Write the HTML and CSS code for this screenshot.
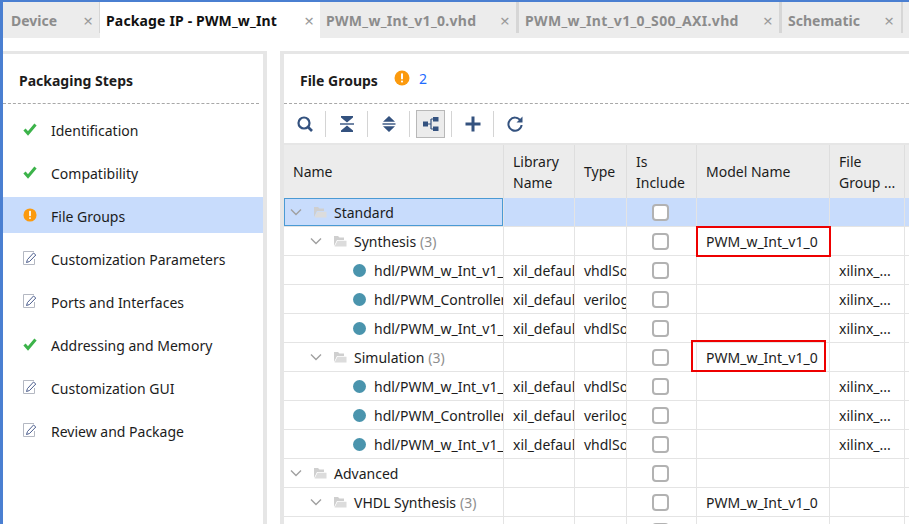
FILE: index.html
```html
<!DOCTYPE html>
<html lang="en">
<head>
  <meta charset="UTF-8">
  <title>Package IP - PWM_w_Int</title>
  <link rel="stylesheet" href="styles.css">
</head>
<body>
  <svg class="defs" width="0" height="0">
    <symbol id="check" viewBox="0 0 14 14"><path d="M1.5 7.5 L5 11.5 L12.5 2.5" fill="none" stroke="#3cb34a" stroke-width="3"/></symbol>
    <symbol id="warn" viewBox="0 0 16 16"><circle cx="8" cy="8" r="7.5" fill="#fb9a0e"/><rect x="7" y="3.2" width="2" height="6.2" rx="0.8" fill="#fff"/><rect x="7" y="10.6" width="2" height="2" rx="0.8" fill="#fff"/></symbol>
    <symbol id="edit" viewBox="0 0 14 14"><path d="M11 .5 H.5 V13.5 H11.5 V8" fill="none" stroke="#b4b8c2"/><path d="M3.5 11.5 L4.5 8.5 L10.5 2 L12.8 4 L6.5 10.5 Z" fill="#fff" stroke="#4c5e8e"/></symbol>
    <symbol id="chev" viewBox="0 0 12 8"><path d="M1 1.5 L6 6.5 L11 1.5" fill="none" stroke="#a0a0a0" stroke-width="1.4"/></symbol>
    <symbol id="folder" viewBox="0 0 14 12"><path d="M1 11 V1 H5 L6.5 2.5 H11 V5 H4 L1 11 Z" fill="#cfcfcf"/><path d="M1.5 11.5 L4.5 5.8 H13.5 V11.5 Z" fill="#dcdcdc"/></symbol>
  </svg>

  <div class="tabs">
    <div class="tab tab-device"><span>Device</span><i>&times;</i></div>
    <div class="tab tab-active tab-package"><span>Package IP - PWM_w_Int</span><i>&times;</i></div>
    <div class="tab tab-vhd"><span>PWM_w_Int_v1_0.vhd</span><i>&times;</i></div>
    <div class="tab tab-axi"><span>PWM_w_Int_v1_0_S00_AXI.vhd</span><i>&times;</i></div>
    <div class="tab tab-sch"><span>Schematic</span><i>&times;</i></div>
  </div>

  <div class="content">
    <aside class="steps">
      <div class="panel-title steps-title"><b>Packaging Steps</b></div>
      <ul class="step-list">
        <li><svg class="ico"><use href="#check"/></svg>Identification</li>
        <li><svg class="ico"><use href="#check"/></svg>Compatibility</li>
        <li class="current"><svg class="ico"><use href="#warn"/></svg>File Groups</li>
        <li><svg class="ico"><use href="#edit"/></svg>Customization Parameters</li>
        <li><svg class="ico"><use href="#edit"/></svg>Ports and Interfaces</li>
        <li><svg class="ico"><use href="#check"/></svg>Addressing and Memory</li>
        <li><svg class="ico"><use href="#edit"/></svg>Customization GUI</li>
        <li><svg class="ico"><use href="#edit"/></svg>Review and Package</li>
      </ul>
    </aside>

    <section class="groups">
      <div class="panel-title"><b>File Groups</b><svg class="title-warn"><use href="#warn"/></svg><span class="count">2</span></div>

      <div class="toolbar">
        <button class="tool"><svg viewBox="0 0 18 18"><circle cx="8" cy="8" r="5.5" fill="none" stroke="#34527f" stroke-width="2.2"/><path d="M12 12 L16 16" stroke="#34527f" stroke-width="2.6"/></svg></button>
        <span class="sep"></span>
        <button class="tool"><svg viewBox="0 0 18 18"><path d="M3 1 H15 V2.5 L9 7.5 L3 2.5 Z M3 17 H15 V15.5 L9 10.5 L3 15.5 Z" fill="#34527f"/><rect x="2" y="8.3" width="14" height="1.4" fill="#34527f"/></svg></button>
        <span class="sep"></span>
        <button class="tool"><svg viewBox="0 0 18 18"><path d="M9 1 L15 6.8 H3 Z M9 17 L15 11.2 H3 Z" fill="#34527f"/><rect x="2.5" y="8.3" width="13" height="1.4" fill="#34527f"/></svg></button>
        <span class="sep"></span>
        <button class="tool tool-on"><svg viewBox="0 0 18 18"><rect x="1" y="6.5" width="5" height="5" fill="#34527f"/><rect x="11" y="2" width="5.5" height="4.5" fill="#34527f"/><rect x="11" y="11.5" width="5.5" height="4.5" fill="#34527f"/><path d="M6 9 H9 M9 4 H11 M9 14 H11 M9 4 V14" fill="none" stroke="#34527f" stroke-width="1.2"/></svg></button>
        <span class="sep"></span>
        <button class="tool"><svg viewBox="0 0 18 18"><path d="M1.5 9 H16.5 M9 1.5 V16.5" stroke="#34527f" stroke-width="3"/></svg></button>
        <span class="sep"></span>
        <button class="tool"><svg viewBox="0 0 18 18"><path d="M14.5 5.5 A6.6 6.6 0 1 0 15.6 10" fill="none" stroke="#34527f" stroke-width="2"/><path d="M16.5 1.5 V7.5 H10.5 Z" fill="#34527f"/></svg></button>
      </div>

      <div class="table-wrap">
        <table class="grid">
          <colgroup>
            <col class="c-name"><col class="c-lib"><col class="c-type"><col class="c-inc"><col class="c-model"><col class="c-group"><col>
          </colgroup>
          <thead>
            <tr>
              <th>Name</th><th>Library<br>Name</th><th>Type</th><th>Is<br>Include</th><th>Model Name</th><th>File<br>Group ...</th><th></th>
            </tr>
          </thead>
          <tbody>
            <tr class="selected">
              <td class="name"><div class="node focus"><svg class="chev"><use href="#chev"/></svg><svg class="folder"><use href="#folder"/></svg>Standard</div></td>
              <td></td><td></td><td class="box"><span></span></td><td></td><td></td><td></td>
            </tr>
            <tr>
              <td class="name"><div class="node lv1"><svg class="chev"><use href="#chev"/></svg><svg class="folder"><use href="#folder"/></svg>Synthesis <em>(3)</em></div></td>
              <td></td><td></td><td class="box"><span></span></td><td>PWM_w_Int_v1_0</td><td></td><td></td>
            </tr>
            <tr>
              <td class="name"><div class="node leaf"><span class="dot"></span>hdl/PWM_w_Int_v1_0.vhd</div></td>
              <td>xil_defaultlib</td><td>vhdlSource</td><td class="box"><span></span></td><td></td><td>xilinx_...</td><td></td>
            </tr>
            <tr>
              <td class="name"><div class="node leaf"><span class="dot"></span>hdl/PWM_Controller.v</div></td>
              <td>xil_defaultlib</td><td>verilogSource</td><td class="box"><span></span></td><td></td><td>xilinx_...</td><td></td>
            </tr>
            <tr>
              <td class="name"><div class="node leaf"><span class="dot"></span>hdl/PWM_w_Int_v1_0_S00_AXI.vhd</div></td>
              <td>xil_defaultlib</td><td>vhdlSource</td><td class="box"><span></span></td><td></td><td>xilinx_...</td><td></td>
            </tr>
            <tr>
              <td class="name"><div class="node lv1"><svg class="chev"><use href="#chev"/></svg><svg class="folder"><use href="#folder"/></svg>Simulation <em>(3)</em></div></td>
              <td></td><td></td><td class="box"><span></span></td><td>PWM_w_Int_v1_0</td><td></td><td></td>
            </tr>
            <tr>
              <td class="name"><div class="node leaf"><span class="dot"></span>hdl/PWM_w_Int_v1_0.vhd</div></td>
              <td>xil_defaultlib</td><td>vhdlSource</td><td class="box"><span></span></td><td></td><td>xilinx_...</td><td></td>
            </tr>
            <tr>
              <td class="name"><div class="node leaf"><span class="dot"></span>hdl/PWM_Controller.v</div></td>
              <td>xil_defaultlib</td><td>verilogSource</td><td class="box"><span></span></td><td></td><td>xilinx_...</td><td></td>
            </tr>
            <tr>
              <td class="name"><div class="node leaf"><span class="dot"></span>hdl/PWM_w_Int_v1_0_S00_AXI.vhd</div></td>
              <td>xil_defaultlib</td><td>vhdlSource</td><td class="box"><span></span></td><td></td><td>xilinx_...</td><td></td>
            </tr>
            <tr>
              <td class="name"><div class="node"><svg class="chev"><use href="#chev"/></svg><svg class="folder"><use href="#folder"/></svg>Advanced</div></td>
              <td></td><td></td><td class="box"><span></span></td><td></td><td></td><td></td>
            </tr>
            <tr>
              <td class="name"><div class="node lv1"><svg class="chev"><use href="#chev"/></svg><svg class="folder"><use href="#folder"/></svg>VHDL Synthesis <em>(3)</em></div></td>
              <td></td><td></td><td class="box"><span></span></td><td>PWM_w_Int_v1_0</td><td></td><td></td>
            </tr>
            <tr>
              <td class="name"></td>
              <td></td><td></td><td class="box"><span></span></td><td></td><td></td><td></td>
            </tr>
          </tbody>
        </table>
        <div class="mark mark-a"></div>
        <div class="mark mark-b"></div>
      </div>
    </section>
  </div>
</body>
</html>
```

FILE: styles.css
```css
html, body { margin: 0; height: 100%; overflow: hidden; }
body { font-family: "Noto Sans", "Open Sans", sans-serif; font-size: 14px; color: #1c1c1c; background: #fff; border-top: 2px solid #4a7fd1; border-left: 3px solid #4a7fd1; box-sizing: border-box; }
.defs { position: absolute; }

/* tabs */
.tabs { display: flex; height: 36px; background: #ececec; }
.tab { display: flex; align-items: center; justify-content: space-between; box-sizing: border-box; height: 36px; padding: 0 9px 0 6px; font-weight: bold; color: #8c8c8c; background: linear-gradient(#d6d6d6, #d6d6d6) right top / 3px 31px no-repeat; }
.tab span { white-space: nowrap; }
.tab i { font-style: normal; font-weight: normal; font-size: 17px; color: #9a9a9a; }
.tab-device { width: 97px; padding-left: 8px; padding-right: 7px; background-size: 1px 31px; }
.tab-active { background: #fff; color: #111; padding-right: 6px; }
.tab-package { width: 220px; letter-spacing: .15px; }
.tab-vhd { width: 199px; letter-spacing: .3px; }
.tab-axi { width: 263px; letter-spacing: .35px; }
.tab-sch { width: 121px; background-size: 2px 31px; }

/* panels */
.content { display: flex; padding-top: 13px; gap: 13px; height: 500px; }
.steps { width: 260px; flex: none; border-top: 3px solid #e6e6e6; border-right: 4px solid #e6e6e6; }
.groups { flex: 1; min-width: 0; border-top: 3px solid #e6e6e6; border-left: 4px solid #e6e6e6; }
.panel-title { display: flex; align-items: center; height: 50px; padding: 3px 0 0 16px; border-bottom: 1px dashed #a8a8a8; box-sizing: border-box; }
.steps-title { margin-right: 4px; }
.title-warn { width: 16px; height: 16px; margin: -4px 0 0 16px; }
.count { margin: -3px 0 0 9px; color: #1f6bff; }

/* steps */
.step-list { list-style: none; margin: 7px 0 0; padding: 0; display: flex; flex-direction: column; gap: 7px; }
.step-list li { display: flex; align-items: center; box-sizing: border-box; height: 36px; padding: 2px 0 0 20px; }
.step-list .current { background: #c8dcfc; }
.ico { width: 14px; height: 14px; margin: -3px 14px 0 0; flex: none; }

/* toolbar */
.toolbar { display: flex; align-items: center; gap: 6px; height: 39px; padding-left: 6px; border-bottom: 2px solid #e6e6e6; }
.tool { display: flex; align-items: center; justify-content: center; width: 29px; height: 28px; padding: 0; background: none; border: 1px solid transparent; box-sizing: border-box; }
.tool svg { width: 18px; height: 18px; }
.tool-on { background: #ececec; border-color: #b8b8b8; }
.sep { width: 1px; height: 26px; background: #d4d4d4; }

/* table */
.table-wrap { position: relative; }
.grid { width: 100%; table-layout: fixed; border-collapse: separate; border-spacing: 0; }
.c-name { width: 220px; }
.c-lib { width: 71px; }
.c-type { width: 52px; }
.c-inc { width: 70px; }
.c-model { width: 133px; }
.c-group { width: 75px; }
.grid th { height: 53px; padding: 0 0 0 9px; background: #ececec; font-weight: normal; text-align: left; line-height: 21px; border-right: 1px solid #dedede; box-sizing: border-box; }
.grid td { height: 29px; padding: 0 0 0 9px; border-right: 1px solid #e4e4e4; border-bottom: 1px solid #e4e4e4; box-sizing: border-box; white-space: nowrap; overflow: hidden; }
.grid th:last-child, .grid td:last-child { border-right: 0; }
.grid td.name { padding: 0; }
.selected td { background: #c8dcfc; }
.node { display: flex; align-items: center; height: 28px; box-sizing: border-box; padding-left: 6px; white-space: nowrap; overflow: hidden; }
.lv1 { padding-left: 26px; }
.leaf { padding-left: 69px; }
.focus { border: 1px solid #4a9ad4; padding-left: 5px; }
.chev { width: 12px; height: 8px; flex: none; margin-right: 11px; }
.folder { width: 14px; height: 12px; flex: none; margin-right: 7px; }
.node em { font-style: normal; color: #8e8e8e; margin-left: 4px; }
.dot { width: 13px; height: 13px; border-radius: 50%; background: #4a94ad; flex: none; margin-right: 8px; }
.grid td.box { padding-left: 25px; }
.box span { display: block; width: 17px; height: 17px; border: 2px solid #b2b2b2; border-radius: 4px; background: #fff; box-sizing: border-box; }

/* red annotation boxes drawn over the table */
.mark { position: absolute; border: 2px solid #ee0000; box-sizing: border-box; pointer-events: none; }
.mark-a { left: 412px; top: 81px; width: 135px; height: 31px; }
.mark-b { left: 407px; top: 195px; width: 135px; height: 32px; }
```
